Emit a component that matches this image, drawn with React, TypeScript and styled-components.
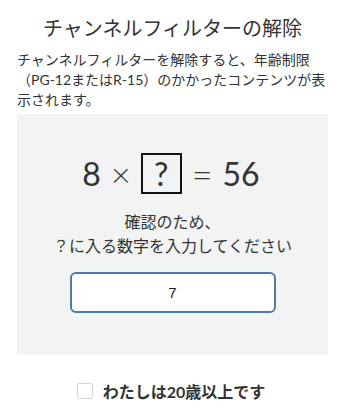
import React, { useState } from 'react';
import styled, { createGlobalStyle } from 'styled-components';

const GlobalStyle = createGlobalStyle`
  body {
    margin: 0;
    background: #fff;
    font-family: Lato, 'Noto Sans CJK JP', sans-serif;
    color: #333;
  }
`;

const Page = styled.div`
  width: 345px;
  padding: 14px 17px 0;
  box-sizing: border-box;
`;

const Title = styled.h1`
  margin: 0;
  font-size: 20px;
  font-weight: 400;
  line-height: 28px;
  text-align: center;
  color: #333;
`;

const Description = styled.p`
  margin: 8px -8px 0 0;
  font-size: 14px;
  line-height: 20px;
  color: #333;
`;

const QuizBox = styled.div`
  margin-top: 4px;
  background: #f2f3f3;
  height: 241px;
  display: flex;
  flex-direction: column;
  align-items: center;
  padding-top: 39px;
  box-sizing: border-box;
`;

const Equation = styled.div`
  display: flex;
  align-items: center;
  gap: 10px;
  margin-left: -3px;
  font-size: 32px;
  line-height: 40px;
  color: #333;
`;

const Operator = styled.span<{ size: number }>`
  font-size: ${p => p.size}px;
  font-weight: 300;
`;

const Blank = styled.span`
  display: inline-flex;
  align-items: center;
  justify-content: center;
  width: 37px;
  height: 37px;
  border: 2px solid #111;
`;

const Prompt = styled.p`
  margin: 16px 0 0;
  font-size: 16px;
  line-height: 24px;
  text-align: center;
  color: #333;
`;

const AnswerInput = styled.input`
  margin-top: 14px;
  width: 206px;
  height: 41px;
  box-sizing: border-box;
  border: 2px solid #5079ab;
  border-radius: 6px;
  background: #fff;
  text-align: center;
  font-family: 'Liberation Sans', Arial, sans-serif;
  font-size: 15px;
  color: #222;
  outline: none;
`;

const AgeRow = styled.label`
  display: flex;
  align-items: center;
  justify-content: center;
  gap: 10px;
  margin-top: 24px;
  margin-left: -3px;
  font-size: 16px;
  font-weight: 700;
  color: #333;
`;

const Check = styled.span<{ checked: boolean }>`
  width: 16px;
  height: 16px;
  box-sizing: border-box;
  border: 1.5px solid #d6d6d6;
  border-radius: 2px;
  background: ${p => (p.checked ? '#5079ab' : '#fff')};
`;

const App = () => {
  const [answer, setAnswer] = useState('7');
  const [adult, setAdult] = useState(false);

  return (
    <Page>
      <GlobalStyle />
      <Title>チャンネルフィルターの解除</Title>
      <Description>
        チャンネルフィルターを解除すると、年齢制限（PG-12またはR-15）のかかったコンテンツが表示されます。
      </Description>
      <QuizBox>
        <Equation>
          <span>8</span>
          <Operator size={34}>×</Operator>
          <Blank>?</Blank>
          <Operator size={36}>=</Operator>
          <span>56</span>
        </Equation>
        <Prompt>
          確認のため、
          <br />
          ？に入る数字を入力してください
        </Prompt>
        <AnswerInput value={answer} onChange={e => setAnswer(e.target.value)} />
      </QuizBox>
      <AgeRow onClick={() => setAdult(!adult)}>
        <Check checked={adult} />
        わたしは20歳以上です
      </AgeRow>
    </Page>
  );
};

export default App;
